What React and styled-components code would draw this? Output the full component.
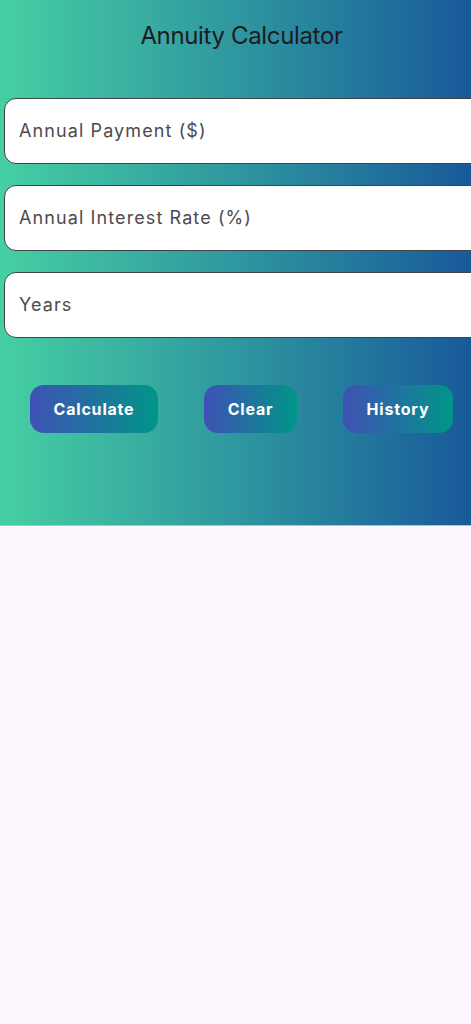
import React from 'react'
import styled, { createGlobalStyle } from 'styled-components'

const GlobalStyle = createGlobalStyle`
  html, body {
    margin: 0;
    padding: 0;
    background: #fef7ff;
    font-family: Inter, "Noto Sans", sans-serif;
  }
`

const Screen = styled.div`
  width: 471px;
  min-height: 1024px;
  background: #fef7ff;
  overflow: hidden;
`

const Hero = styled.section`
  height: 526px;
  background: linear-gradient(90deg, #46cfa3 0%, #2f979f 50%, #185a9a 100%);
  display: flex;
  flex-direction: column;
  border-bottom: 1px solid #8fd3c6;
  box-sizing: border-box;
`

const Title = styled.h1`
  margin: 0;
  padding: 20px 0 0 12px;
  height: 32px;
  text-align: center;
  font-size: 24px;
  font-weight: 400;
  line-height: 32px;
  letter-spacing: -0.35px;
  color: #1d1b20;
`

const Fields = styled.div`
  display: flex;
  flex-direction: column;
  gap: 21.5px;
  margin-top: 46px;
  padding-left: 4px;
`

const Field = styled.input`
  width: 500px;
  height: 65.5px;
  box-sizing: border-box;
  padding: 0 14px;
  border: 1px solid #3f4346;
  border-radius: 12px;
  background: #ffffff;
  font-family: inherit;
  font-size: 18px;
  letter-spacing: 1.1px;
  color: #1d1b20;
  outline: none;

  &::placeholder {
    color: #4d4a52;
  }
`

const Actions = styled.div`
  display: flex;
  gap: 46px;
  margin-top: 47px;
  padding-left: 30px;
`

const Action = styled.button`
  width: ${p => p.$w}px;
  height: 48px;
  border: none;
  border-radius: 14px;
  background: linear-gradient(90deg, #3f51b5 0%, #009688 100%);
  color: #ffffff;
  font-family: inherit;
  font-size: 16px;
  font-weight: 700;
  letter-spacing: 0.8px;
  cursor: pointer;
`

const fields = ['Annual Payment ($)', 'Annual Interest Rate (%)', 'Years']

const buttons = [
  { label: 'Calculate', w: 128 },
  { label: 'Clear', w: 93 },
  { label: 'History', w: 110 },
]

const App = () => (
  <Screen>
    <GlobalStyle />
    <Hero>
      <Title>Annuity Calculator</Title>
      <Fields>
        {fields.map(f => (
          <Field key={f} placeholder={f} />
        ))}
      </Fields>
      <Actions>
        {buttons.map(b => (
          <Action key={b.label} $w={b.w}>
            {b.label}
          </Action>
        ))}
      </Actions>
    </Hero>
  </Screen>
)

export default App
